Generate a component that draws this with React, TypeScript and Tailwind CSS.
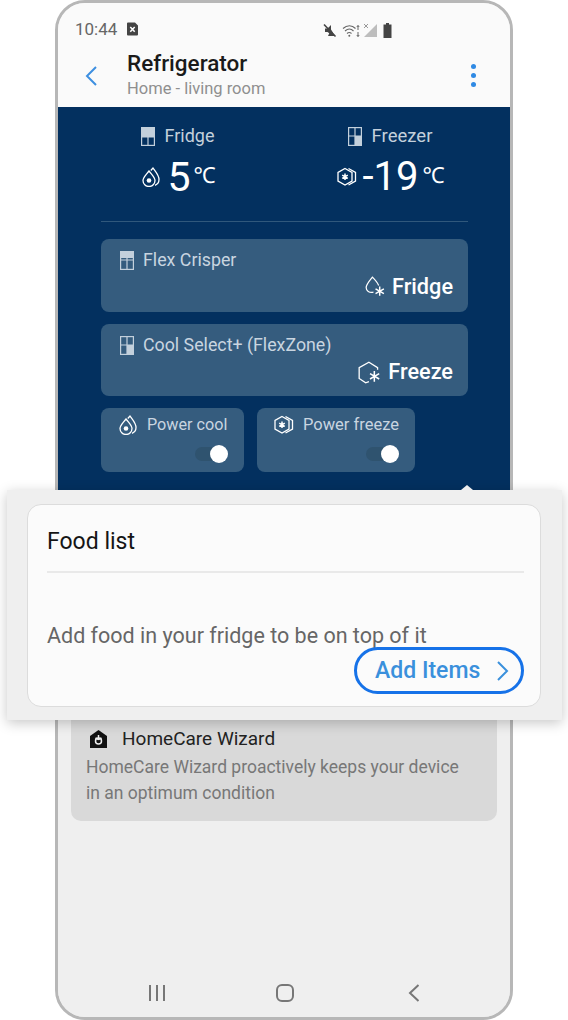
import React from "react";

const FridgeGlyph = ({ fill }: { fill: "top" | "right" | "topAll" }) => (
  <svg className="shrink-0" width="14" height="19" viewBox="0 0 14 19" fill="none">
    <rect x="0.6" y="0.6" width="12.8" height="17.8" stroke="#c3d0dc" strokeWidth="1.2" />
    {fill === "top" && <rect x="1" y="1" width="12" height="9" fill="#c3d0dc" />}
    {fill === "topAll" && <rect x="1" y="1" width="12" height="6" fill="#c3d0dc" />}
    {fill === "right" && <rect x="7" y="9" width="6" height="9" fill="#c3d0dc" />}
    <path d={fill === "top" ? "M0 10H14M7 10V18" : "M0 9H14M7 0V18"} stroke="#c3d0dc" strokeWidth="1.2" />
  </svg>
);

const CoolIcon = ({ size = 20 }: { size?: number }) => (
  <svg className="shrink-0" width={size} height={size} viewBox="0 0 20 20" fill="none" stroke="#fff" strokeWidth="1.300">
    <path d="M8 4C5 8 2 10.500 2 13.500a6 6 0 0 0 12 0C14 10.500 11 8 8 4Z" />
    <path d="M9.800 3.500 12 1C14 4 18 8 18 12.500C18 15.500 16.500 17.300 14 18.300" />
    <circle cx="8" cy="13.500" r="2.300" fill="#fff" stroke="none" />
  </svg>
);

const FreezeIcon = ({ size = 22 }: { size?: number }) => (
  <svg className="shrink-0" width={size} height={size} viewBox="0 0 22 22" fill="none" stroke="#fff" strokeWidth="1.300">
    <path d="M9 2.500 16 6.500V15L9 19 2 15V6.500Z" />
    <path d="M12.500 2.500 19.500 6.500V15L12.500 19" />
    <path d="M9 7.500V14M6.200 9.100 11.800 12.400M11.800 9.100 6.200 12.400" strokeWidth="1.500" />
  </svg>
);

const Toggle = () => (
  <div className="relative h-[14px] w-[32px] rounded-full bg-[#2f536f]">
    <div className="absolute right-[-1px] top-[-2px] h-[18px] w-[18px] rounded-full bg-white" />
  </div>
);

export default function App() {
  return (
    <div className="relative h-[1020px] w-[568px] overflow-hidden bg-white [font-family:Roboto,'Noto_Sans',sans-serif]">
      <div className="ml-[55px] flex h-[1020px] w-[458px] flex-col overflow-hidden rounded-[30px] border-[3px] border-[#b7b7b7] bg-[#efefef]">
        {/* status bar */}
        <div className="flex h-[44px] shrink-0 items-end bg-[#fafafa] pb-[9px] pl-[17px] pr-[118px]">
          <span className="text-[17px] leading-[18px] text-[#666]">10:44</span>
          <svg className="mb-[2px] ml-[9px]" width="13" height="14" viewBox="0 0 13 14">
            <path d="M1 1.500A1 1 0 0 1 2 .5H9L12 3.500V12.500A1 1 0 0 1 11 13.500H2A1 1 0 0 1 1 12.500Z" fill="#444" />
            <path d="M4.300 5 8.700 9.800M8.700 5 4.300 9.800" stroke="#fff" strokeWidth="1.500" />
          </svg>
          <div className="ml-auto flex items-center gap-[5px]">
            <svg width="15" height="15" viewBox="0 0 15 15" fill="none">
              <path d="M3 5.500H5.500L9 2V11.500L5.500 9H3Z" fill="#444" />
              <path d="M2 1.500 13.500 13.500" stroke="#444" strokeWidth="1.600" />
              <path d="M9 6.500 13 13H6Z" fill="#444" />
            </svg>
            <svg width="20" height="14" viewBox="0 0 20 14" fill="none" stroke="#666" strokeWidth="1.100">
              <path d="M1 4.500C5 .8 10 .8 13.500 4.500M3 7c2.800-2.500 6-2.500 8.500 0M5 9.500c1.500-1.300 3-1.300 4.500 0" />
              <circle cx="7.300" cy="11.800" r="1" fill="#666" stroke="none" />
              <path d="M16 1.500V6M14.800 3 16 1.500 17.200 3M16 8V12.500M14.800 11 16 12.500 17.200 11" strokeWidth="1" />
            </svg>
            <svg className="-ml-[4px]" width="15" height="15" viewBox="0 0 15 15">
              <path d="M14 1V14H1Z" fill="#bdbdbd" />
              <path d="M1 1 5 5M5 1 1 5" stroke="#999" strokeWidth="1" />
            </svg>
            <svg width="9" height="15" viewBox="0 0 9 15">
              <path d="M3 0H6V1.500H8.500V15H.5V1.500H3Z" fill="#444" />
            </svg>
          </div>
        </div>

        {/* header */}
        <div className="flex h-[60px] shrink-0 items-center bg-[#fafafa] pl-[26px] pr-[34px]">
          <svg className="mt-[-2px]" width="14" height="22" viewBox="0 0 14 22" fill="none">
            <path d="M12 2 3 11 12 20" stroke="#3d8fe0" strokeWidth="2" />
          </svg>
          <div className="ml-[29px] mt-[-4px] flex flex-col">
            <span className="text-[22.500px] font-medium leading-[26px] text-[#1a1a1a]">Refrigerator</span>
            <span className="mt-[2px] text-[16.500px] leading-[22px] text-[#8f8f8f]">Home - living room</span>
          </div>
          <div className="ml-auto mt-[-4px] flex flex-col gap-[4px]">
            <span className="h-[5px] w-[5px] rounded-full bg-[#2f8ae4]" />
            <span className="h-[5px] w-[5px] rounded-full bg-[#2f8ae4]" />
            <span className="h-[5px] w-[5px] rounded-full bg-[#2f8ae4]" />
          </div>
        </div>

        {/* blue panel */}
        <div className="flex h-[400px] shrink-0 flex-col bg-[#03305f]">
          <div className="grid grid-cols-2 px-[14px] pt-[18px]">
            <div className="flex flex-col items-center">
              <div className="flex h-[22px] items-center gap-[9px]">
                <FridgeGlyph fill="top" />
                <span className="text-[18px] leading-[22px] text-[#c3d0dc]">Fridge</span>
              </div>
              <div className="mt-[8px] flex h-[44px] items-center">
                <CoolIcon />
                <span className="ml-[7px] text-[41px] leading-[44px] text-white">5</span>
                <span className="mb-[3px] ml-[3px] text-[22px] leading-[30px] text-white">℃</span>
              </div>
            </div>
            <div className="flex flex-col items-center">
              <div className="flex h-[22px] items-center gap-[10px]">
                <FridgeGlyph fill="right" />
                <span className="text-[18.500px] leading-[22px] text-[#c3d0dc]">Freezer</span>
              </div>
              <div className="mt-[8px] flex h-[44px] items-center">
                <FreezeIcon />
                <span className="ml-[5px] text-[40px] leading-[44px] text-white">-19</span>
                <span className="mb-[3px] ml-[4px] text-[22px] leading-[30px] text-white">℃</span>
              </div>
            </div>
          </div>

          <div className="ml-[43px] mr-[42px] mt-[22px] flex flex-col">
            <div className="h-px bg-[#30587c]" />

            <div className="mt-[17px] flex h-[73px] flex-col rounded-[8px] bg-[#355c7e] pl-[19px] pr-[15px] pt-[11px]">
              <div className="flex items-center gap-[9px]">
                <FridgeGlyph fill="topAll" />
                <span className="text-[17.800px] leading-[20px] text-[#c9d5e0]">Flex Crisper</span>
              </div>
              <div className="mt-[4px] flex items-center justify-end gap-[7px]">
                <svg width="21" height="24" viewBox="0 0 20 23" fill="none" stroke="#fff" strokeWidth="1.200">
                  <path d="M9 16.500C5 17.500 2 15 2 12C2 9 6 4.500 8 2C10 4 13 7.500 14 10" />
                  <path d="M15 11V20M11 13.200 19 17.800M19 13.200 11 17.800" strokeWidth="1.400" />
                </svg>
                <span className="text-[21.700px] font-medium leading-[26px] text-white">Fridge</span>
              </div>
            </div>

            <div className="mt-[12px] flex h-[72px] flex-col rounded-[8px] bg-[#355c7e] pl-[19px] pr-[15px] pt-[11px]">
              <div className="flex items-center gap-[9px]">
                <FridgeGlyph fill="right" />
                <span className="text-[17.800px] leading-[20px] text-[#c9d5e0]">Cool Select+ (FlexZone)</span>
              </div>
              <div className="mt-[4px] flex items-center justify-end gap-[5px]">
                <svg width="26" height="25" viewBox="0 0 24 23" fill="none" stroke="#fff" strokeWidth="1.200">
                  <path d="M11 20 8 21 2 17V7L11 2 19 7V9" />
                  <path d="M16 10V20M12 12.500 20.500 17.500M20.500 12.500 12 17.500" strokeWidth="1.400" />
                </svg>
                <span className="text-[21.700px] font-medium leading-[26px] text-white">Freeze</span>
              </div>
            </div>

            <div className="mt-[12px] flex gap-[13px]">
              <div className="flex h-[64px] w-[143px] flex-col rounded-[8px] bg-[#355c7e] pl-[17px] pr-[17px] pt-[7px]">
                <div className="flex items-center gap-[9px]">
                  <CoolIcon />
                  <span className="whitespace-nowrap text-[16.200px] leading-[20px] text-[#c9d5e0]">Power cool</span>
                </div>
                <div className="mt-[12px] flex justify-end">
                  <Toggle />
                </div>
              </div>
              <div className="flex h-[64px] w-[158px] flex-col rounded-[8px] bg-[#355c7e] pl-[16px] pr-[17px] pt-[6px]">
                <div className="flex items-center gap-[8px]">
                  <FreezeIcon />
                  <span className="whitespace-nowrap text-[16.500px] leading-[20px] text-[#c9d5e0]">Power freeze</span>
                </div>
                <div className="mt-[11px] flex justify-end">
                  <Toggle />
                </div>
              </div>
            </div>
          </div>
        </div>

        {/* dimmed content */}
        <div className="flex flex-1 flex-col bg-[#efefef]">
          <div className="mx-[13px] mt-[180px] h-[134px] rounded-[10px] bg-[#d9d9d9] pl-[15px] pr-[25px] pt-[40px]">
            <div className="flex items-center">
              <svg className="ml-[4px]" width="17" height="18" viewBox="0 0 17 18">
                <path d="M0 6 8.500 0 17 6V18H0Z" fill="#111" />
                <path d="M8.500 5V9.500M8.500 9.500 5.500 8M8.500 9.500 11.500 8" stroke="#eee" strokeWidth="1.500" fill="none" />
                <circle cx="8.500" cy="11" r="3" fill="none" stroke="#eee" strokeWidth="1.500" />
              </svg>
              <span className="ml-[15px] text-[19px] leading-[24px] text-[#222]">HomeCare Wizard</span>
            </div>
            <p className="mt-[3px] text-[17.500px] leading-[26px] text-[#777]">
              HomeCare Wizard proactively keeps your device in an optimum condition
            </p>
          </div>
          <div className="mt-auto flex h-[37px] items-start px-[89px]">
            <svg className="mt-[4px]" width="20" height="18" viewBox="0 0 20 18" fill="none" stroke="#777" strokeWidth="2">
              <path d="M3 1V17M10 1V17M17 1V17" />
            </svg>
            <svg className="ml-[109px] mt-[4px]" width="18" height="18" viewBox="0 0 18 18" fill="none" stroke="#777" strokeWidth="2">
              <rect x="1" y="1" width="16" height="16" rx="5" />
            </svg>
            <svg className="ml-[114px] mt-[4px]" width="12" height="18" viewBox="0 0 12 18" fill="none" stroke="#777" strokeWidth="2">
              <path d="M10.500 1 2 9 10.500 17" />
            </svg>
          </div>
        </div>
      </div>

      {/* highlighted overlay */}
      <div className="absolute left-[7px] top-[490px] h-[230px] w-[555px] bg-[#efefef] pl-[20px] pr-[21px] pt-[14px] shadow-[0_3px_12px_rgba(0,0,0,0.22)]">
        <div className="absolute left-[454px] top-[-5px] h-0 w-0 border-x-[6px] border-b-[5px] border-x-transparent border-b-[#efefef]" />
        <div className="h-[203px] rounded-[14px] border border-[#dcdcdc] bg-[#fbfbfb] pl-[19px] pr-[16px]">
          <div className="flex h-[68px] items-end border-b-2 border-[#e9e9e9] pb-[15px]">
            <span className="text-[23px] leading-[28px] text-[#151515]">Food list</span>
          </div>
          <p className="mt-[49px] text-[21.500px] leading-[28px] text-[#666]">Add food in your fridge to be on top of it</p>
          <div className="flex justify-end">
            <div className="mt-[-3px] flex h-[47px] w-[170px] items-center rounded-full border-[3px] border-[#1672e8] bg-[#fbfbfb] pl-[18px]">
              <span className="text-[23px] font-medium leading-[28px] text-[#3a90dc]">Add Items</span>
              <svg className="ml-[16px]" width="13" height="22" viewBox="0 0 13 22" fill="none">
                <path d="M2 2 11 11 2 20" stroke="#3a90dc" strokeWidth="2" />
              </svg>
            </div>
          </div>
        </div>
      </div>
    </div>
  );
}
